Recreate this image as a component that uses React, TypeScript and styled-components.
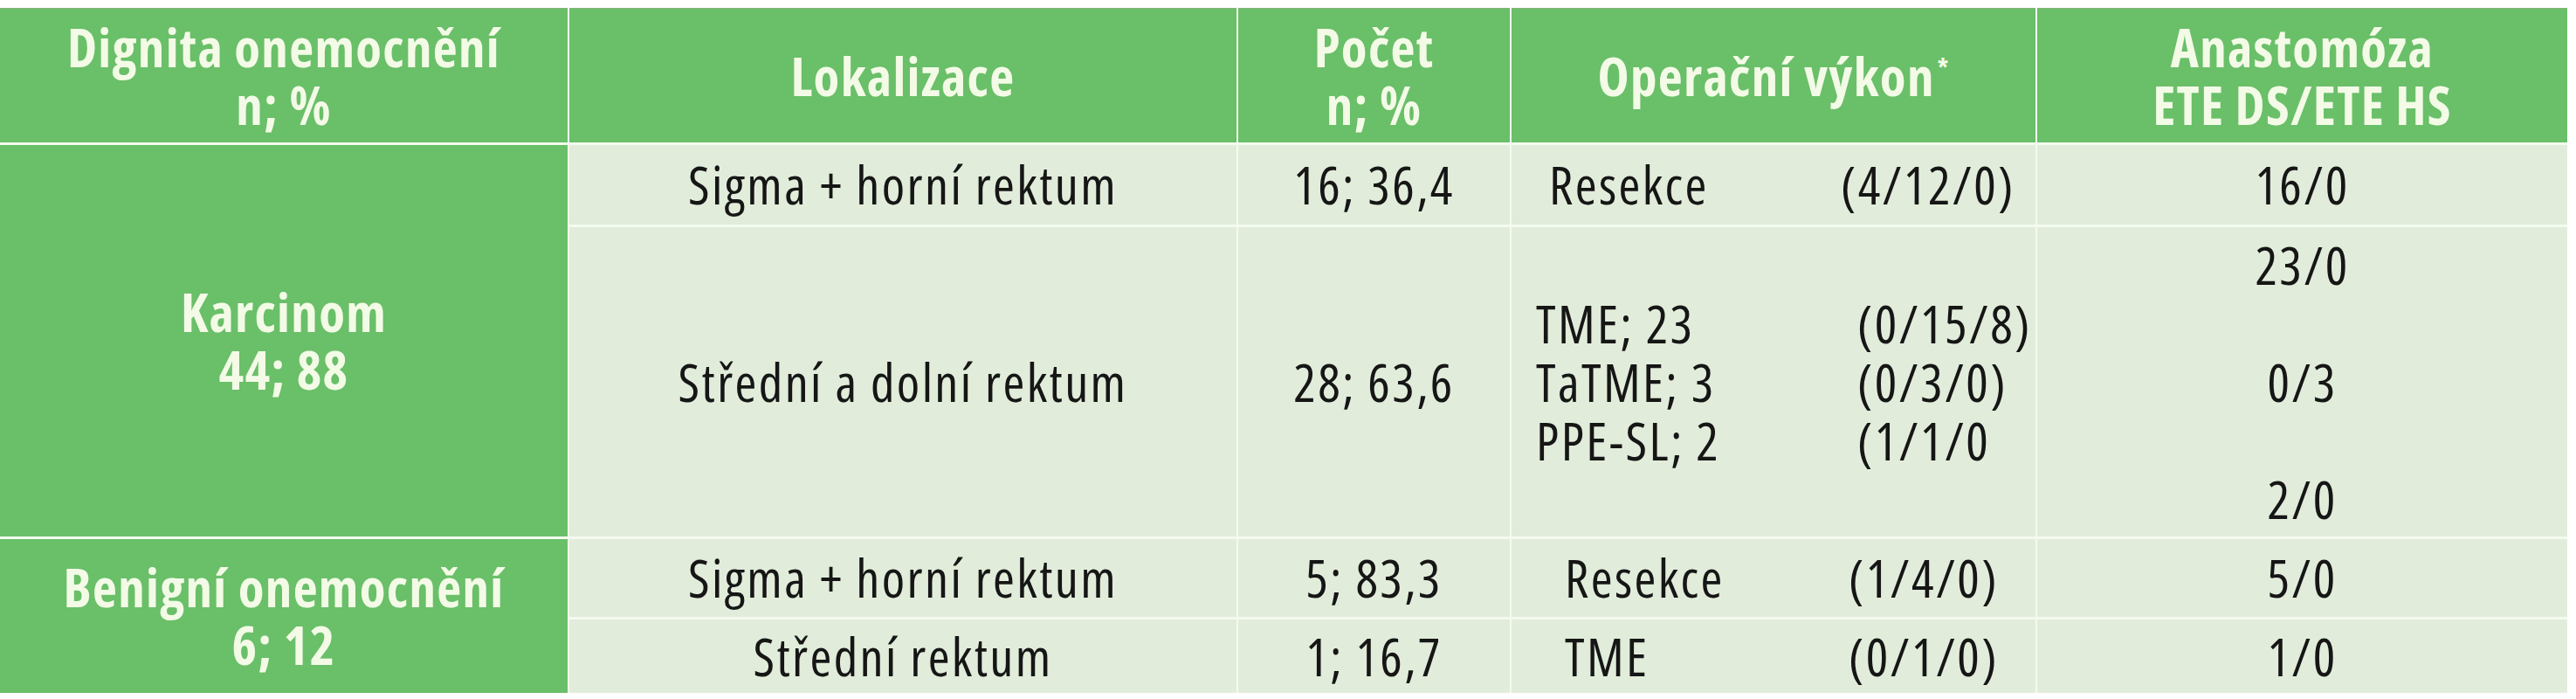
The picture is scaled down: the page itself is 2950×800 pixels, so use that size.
import React from "react";
import styled, { createGlobalStyle } from "styled-components";

const GlobalStyle = createGlobalStyle`
  body {
    margin: 0;
    padding-top: 9px;
    background: #ffffff;
  }
`;

const green = "#6abf69";
const pale = "#e1edda";
const rule = "#f4faef";

const Table = styled.div`
  display: grid;
  grid-template-columns: 650px 764px 311px 600px 607px;
  grid-template-rows: 154px 91px 354px 89px 84px;
  gap: 3px 2px;
  width: 2940px;
  background: ${rule};
  font-family: "Open Sans", "Liberation Sans", sans-serif;
  font-stretch: 75%;
`;

const HeadCell = styled.div`
  display: flex;
  align-items: center;
  justify-content: center;
  background: ${green};
  color: #f3fbe7;
  font-size: 61px;
  font-weight: 700;
  letter-spacing: 1.3px;
  line-height: 66px;
  text-align: center;
  border-top: 1px solid #83b377;
`;

const GroupCell = styled.div<{ $rows: string }>`
  grid-column: 1;
  grid-row: ${(p) => p.$rows};
  display: flex;
  align-items: center;
  justify-content: center;
  background: ${green};
  color: #f3fbe7;
  font-size: 61px;
  font-weight: 700;
  letter-spacing: 1.3px;
  line-height: 66px;
  text-align: center;
`;

const Cell = styled.div`
  display: flex;
  align-items: center;
  justify-content: center;
  background: ${pale};
  color: #161616;
  font-size: 60px;
  letter-spacing: 2.4px;
  line-height: 67px;
  text-align: center;
  white-space: nowrap;
`;

const OpCell = styled.div<{ $pad: number; $split: number }>`
  display: grid;
  grid-template-columns: ${(p) => p.$split}px 1fr;
  align-content: center;
  padding-left: ${(p) => p.$pad}px;
  background: ${pale};
  color: #161616;
  font-size: 60px;
  letter-spacing: 2.4px;
  line-height: 67px;
  white-space: nowrap;
`;

const Star = styled.sup`
  font-size: 28px;
  line-height: 0;
  vertical-align: 22px;
  margin-left: 3px;
`;

const Lines = ({ items }: { items: React.ReactNode[] }) => (
  <span>
    {items.map((t, i) => (
      <React.Fragment key={i}>
        {i > 0 && <br />}
        {t}
      </React.Fragment>
    ))}
  </span>
);

export default function App() {
  return (
    <>
      <GlobalStyle />
      <Table>
        <HeadCell>
          <Lines items={["Dignita onemocnění", "n; %"]} />
        </HeadCell>
        <HeadCell>Lokalizace</HeadCell>
        <HeadCell>
          <Lines items={["Počet", "n; %"]} />
        </HeadCell>
        <HeadCell>
          <span>
            Operační výkon<Star>*</Star>
          </span>
        </HeadCell>
        <HeadCell>
          <Lines items={["Anastomóza", "ETE DS/ETE HS"]} />
        </HeadCell>

        <GroupCell $rows="2 / span 2">
          <Lines items={["Karcinom", "44; 88"]} />
        </GroupCell>
        <Cell>Sigma + horní rektum</Cell>
        <Cell>16; 36,4</Cell>
        <OpCell $pad={43} $split={334}>
          <span>Resekce</span>
          <span>(4/12/0)</span>
        </OpCell>
        <Cell>16/0</Cell>

        <Cell>Střední a dolní rektum</Cell>
        <Cell>28; 63,6</Cell>
        <OpCell $pad={28} $split={368}>
          <Lines items={["TME; 23", "TaTME; 3", "PPE-SL; 2"]} />
          <Lines items={["(0/15/8)", "(0/3/0)", "(1/1/0"]} />
        </OpCell>
        <Cell>
          <Lines items={["23/0", "\u00a0", "0/3", "\u00a0", "2/0"]} />
        </Cell>

        <GroupCell $rows="4 / span 2">
          <Lines items={["Benigní onemocnění", "6; 12"]} />
        </GroupCell>
        <Cell>Sigma + horní rektum</Cell>
        <Cell>5; 83,3</Cell>
        <OpCell $pad={61} $split={325}>
          <span>Resekce</span>
          <span>(1/4/0)</span>
        </OpCell>
        <Cell>5/0</Cell>

        <Cell>Střední rektum</Cell>
        <Cell>1; 16,7</Cell>
        <OpCell $pad={61} $split={325}>
          <span>TME</span>
          <span>(0/1/0)</span>
        </OpCell>
        <Cell>1/0</Cell>
      </Table>
    </>
  );
}
